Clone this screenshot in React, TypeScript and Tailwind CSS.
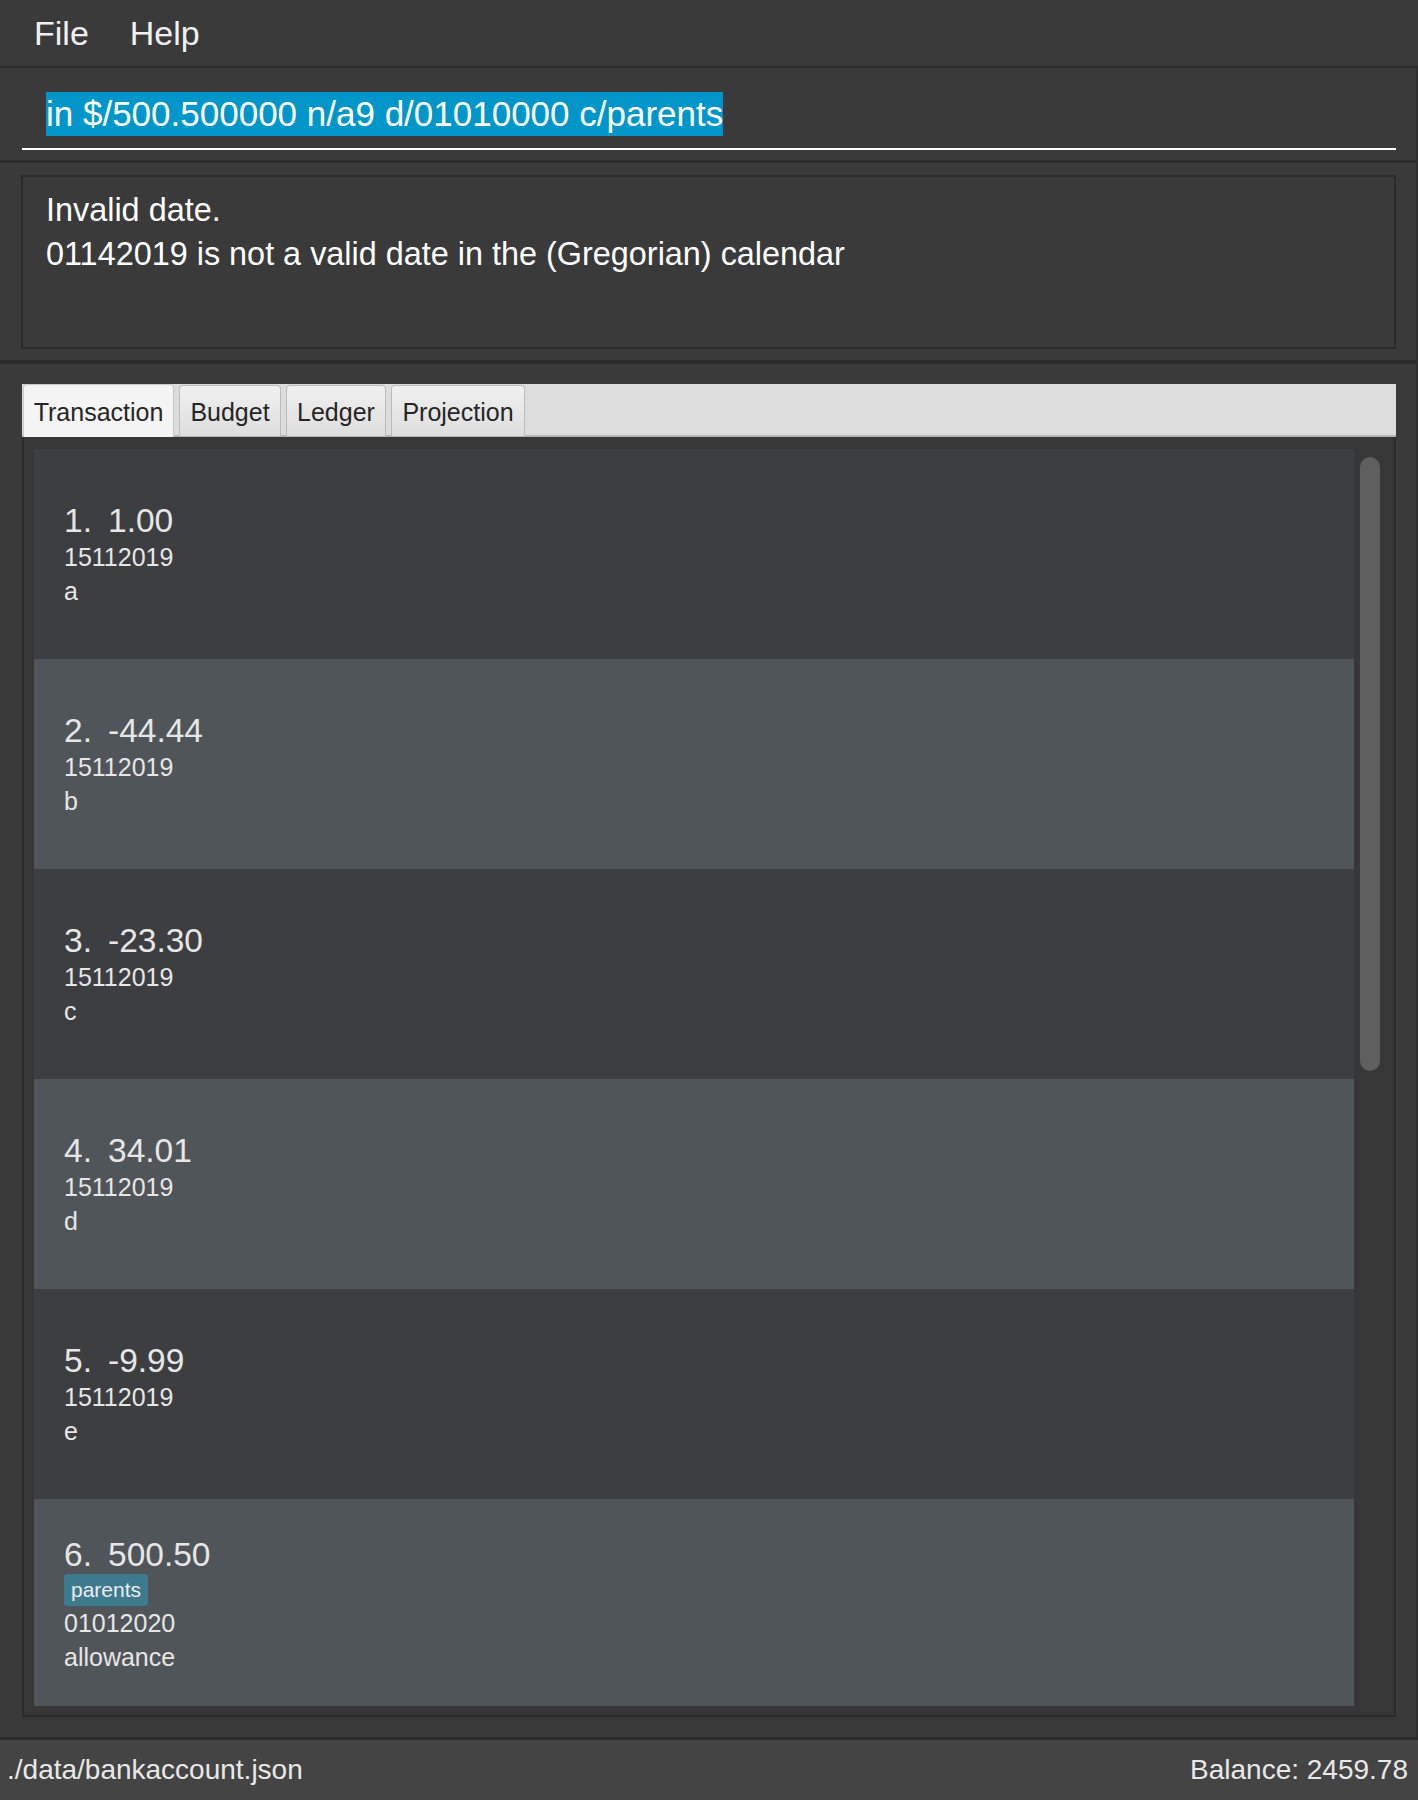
import React from 'react';

type Txn = {
  amount: string;
  date: string;
  desc: string;
  tags?: string[];
};

const transactions: Txn[] = [
  { amount: '1.00', date: '15112019', desc: 'a' },
  { amount: '-44.44', date: '15112019', desc: 'b' },
  { amount: '-23.30', date: '15112019', desc: 'c' },
  { amount: '34.01', date: '15112019', desc: 'd' },
  { amount: '-9.99', date: '15112019', desc: 'e' },
  { amount: '500.50', date: '01012020', desc: 'allowance', tags: ['parents'] },
];

const tabs = [
  { name: 'Transaction', width: 'w-[151px]' },
  { name: 'Budget', width: 'w-[102px]' },
  { name: 'Ledger', width: 'w-[100px]' },
  { name: 'Projection', width: 'w-[134px]' },
];

function TransactionCard({ txn, index }: { txn: Txn; index: number }) {
  const shade = index % 2 === 0 ? 'bg-[#3c3e41]' : 'bg-[#505559]';
  return (
    <div className={`min-h-[210px] shrink-0 flex flex-col justify-center pl-[30px] pt-[2px] ${shade}`}>
      <div className="flex text-[33.5px] leading-[38px] text-[#e6e6e6]">
        <span className="w-[44px]">{index + 1}.</span>
        <span>{txn.amount}</span>
      </div>
      {txn.tags && (
        <div className="flex gap-2">
          {txn.tags.map((tag) => (
            <span
              key={tag}
              className="h-[32px] px-[7px] flex items-center rounded-[3px] bg-[#3d7a8e] text-[21px] text-[#ececec]"
            >
              {tag}
            </span>
          ))}
        </div>
      )}
      <div className="text-[25px] leading-[34px] text-[#e6e6e6]">{txn.date}</div>
      <div className="text-[25px] leading-[34px] text-[#e6e6e6]">{txn.desc}</div>
    </div>
  );
}

export default function App() {
  return (
    <div className="w-[1418px] h-[1800px] flex flex-col overflow-hidden bg-[#3a3a3a] font-['Liberation_Sans',Arial,sans-serif]">
      {/* menu bar */}
      <div className="h-[66px] shrink-0 flex items-center pl-[34px] gap-[41px] text-[34px] leading-[38px] text-[#f0f0f0]">
        <span>File</span>
        <span>Help</span>
      </div>
      <div className="h-[2px] shrink-0 bg-[#2c2c2c]" />

      <div className="flex-1 flex flex-col border-r-2 border-[#2f2f2f] min-h-0">
        {/* command box */}
        <div className="h-[92px] shrink-0 pt-[24px] pl-[22px] pr-[20px]">
          <div className="border-b-2 border-white pb-[12px] pl-[24px]">
            <span className="inline-block bg-[#0096c9] text-white text-[35px] leading-[44px]">
              in $/500.500000 n/a9 d/01010000 c/parents
            </span>
          </div>
        </div>
        <div className="h-[3px] shrink-0 bg-[#2c2c2c]" />

        {/* result display */}
        <div className="h-[197px] shrink-0 pt-[12px] pl-[21px] pr-[20px]">
          <div className="h-[174px] border-2 border-[#2b2b2b] pt-[11px] pl-[23px] text-[32.4px] leading-[44px] text-white">
            <div>Invalid date.</div>
            <div>01142019 is not a valid date in the (Gregorian) calendar</div>
          </div>
        </div>
        <div className="h-[4px] shrink-0 bg-[#2c2c2c]" />

        {/* tab pane */}
        <div className="flex-1 min-h-0 flex flex-col pt-[20px] pl-[22px] pr-[20px] pb-[20px]">
          <div className="h-[53px] shrink-0 flex items-start gap-[5px] pl-[1px] bg-[#dcdcdc] border-b-2 border-[#b5b5b5]">
            {tabs.map((tab, i) => (
              <div
                key={tab.name}
                className={`${tab.width} pt-[1px] flex items-center justify-center text-[25px] leading-[28px] text-[#262626] rounded-t-[4px] border border-b-0 ${
                  i === 0
                    ? 'h-[53px] -mb-[2px] bg-[#f4f4f4] border-[#c8c8c8]'
                    : 'h-[51px] mt-[1px] bg-gradient-to-b from-[#f0f0f0] to-[#dedede] border-[#bcbcbc]'
                }`}
              >
                {tab.name}
              </div>
            ))}
          </div>

          <div className="flex-1 min-h-0 flex border-2 border-t-0 border-[#2b2b2b] bg-[#373737]">
            <div className="flex-1 min-w-0 overflow-hidden pt-[12px] pb-[9px] pl-[10px]">
              <div className="h-full overflow-hidden flex flex-col">
                {transactions.map((txn, i) => (
                  <TransactionCard key={i} txn={txn} index={i} />
                ))}
              </div>
            </div>
            <div className="w-[40px] shrink-0 pt-[20px] pl-[6px]">
              <div className="w-[20px] h-[614px] rounded-[10px] bg-[#5f5f5f]" />
            </div>
          </div>
        </div>
      </div>

      {/* status bar */}
      <div className="h-[3px] shrink-0 bg-[#2c2c2c]" />
      <div className="h-[60px] shrink-0 flex items-center justify-between pl-[7px] pr-[10px] bg-[#444444] text-[28px] leading-[32px] text-[#e8e8e8]">
        <span>./data/bankaccount.json</span>
        <span>Balance: 2459.78</span>
      </div>
    </div>
  );
}
